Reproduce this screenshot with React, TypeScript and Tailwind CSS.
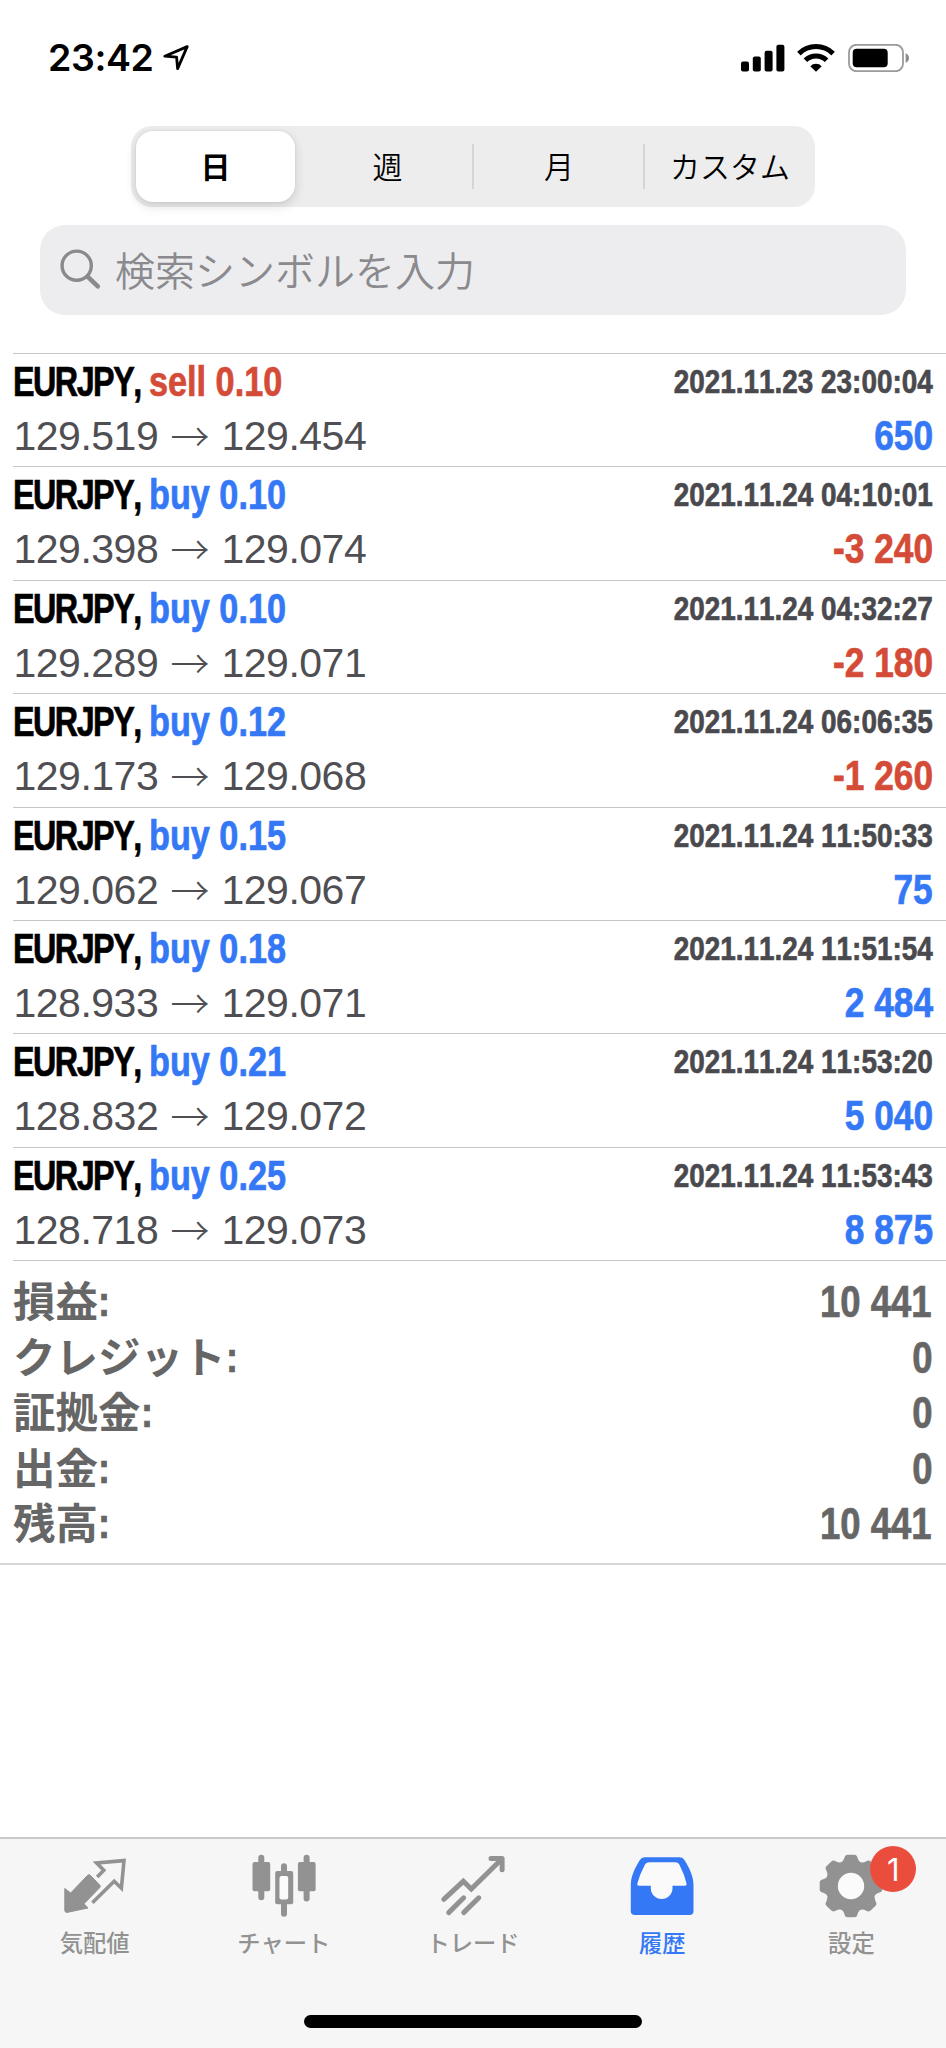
import type { ReactNode } from "react"
import clsx from "clsx"

interface Deal {
  side: "buy" | "sell"
  volume: string
  open: string
  close: string
  time: string
  profit: string
}

const deals: Deal[] = [
  { side: "sell", volume: "0.10", open: "129.519", close: "129.454", time: "2021.11.23 23:00:04", profit: "650" },
  { side: "buy", volume: "0.10", open: "129.398", close: "129.074", time: "2021.11.24 04:10:01", profit: "-3 240" },
  { side: "buy", volume: "0.10", open: "129.289", close: "129.071", time: "2021.11.24 04:32:27", profit: "-2 180" },
  { side: "buy", volume: "0.12", open: "129.173", close: "129.068", time: "2021.11.24 06:06:35", profit: "-1 260" },
  { side: "buy", volume: "0.15", open: "129.062", close: "129.067", time: "2021.11.24 11:50:33", profit: "75" },
  { side: "buy", volume: "0.18", open: "128.933", close: "129.071", time: "2021.11.24 11:51:54", profit: "2 484" },
  { side: "buy", volume: "0.21", open: "128.832", close: "129.072", time: "2021.11.24 11:53:20", profit: "5 040" },
  { side: "buy", volume: "0.25", open: "128.718", close: "129.073", time: "2021.11.24 11:53:43", profit: "8 875" },
]

const totals = [
  { label: "損益", value: "10 441" },
  { label: "クレジット", value: "0" },
  { label: "証拠金", value: "0" },
  { label: "出金", value: "0" },
  { label: "残高", value: "10 441" },
]

const periods = ["日", "週", "月", "カスタム"]

// bold sans squeezed to condensed proportions, with a hairline stroke to keep the stems heavy
const CONDENSED =
  "inline-block whitespace-pre font-['Liberation_Sans',sans-serif] font-bold [font-kerning:none] [-webkit-text-stroke:0.7px_currentColor]"

function StatusBar() {
  return (
    <header className="flex h-[126px] items-start justify-between pl-[48px] pr-[36px] pt-[36px]">
      <div className="flex items-center">
        <span className="font-['Inter',sans-serif] text-[37.5px] font-semibold leading-[44px] tracking-[-0.4px]">23:42</span>
        <svg width="26" height="26" viewBox="0 0 26 26" className="ml-[9px]" fill="none" stroke="#000" strokeWidth="2.8" strokeLinejoin="round">
          <path d="M1.8 11.2 24.2 1.6 14.6 23.6 13.6 12.2Z" />
        </svg>
      </div>
      <div className="flex h-[44px] items-center">
        <svg width="44" height="28" viewBox="0 0 44 28">
          <rect x="0" y="17.5" width="8" height="10" rx="2" />
          <rect x="11.8" y="12.5" width="8" height="15" rx="2" />
          <rect x="23.6" y="6.7" width="8" height="20.8" rx="2" />
          <rect x="35.4" y="0.8" width="8" height="26.7" rx="2" />
        </svg>
        <svg width="38" height="28" viewBox="0 0 38 28" className="ml-[12px]" fill="none" stroke="#000" strokeWidth="5">
          <path d="M1.9 9.6a24.4 24.4 0 0 1 34.2 0" />
          <path d="M8.4 16.3a15.2 15.2 0 0 1 21.2 0" />
          <path d="M13.3 22.2a8 8 0 0 1 11.4 0L19 27.8Z" fill="#000" stroke="none" />
        </svg>
        <svg width="62" height="28" viewBox="0 0 62 28" className="ml-[13px]">
          <rect x="1" y="0.8" width="54" height="26.4" rx="7.5" fill="none" stroke="#9b9b9b" strokeWidth="1.8" />
          <rect x="4.7" y="4.8" width="35" height="18.4" rx="4" />
          <path d="M57.6 9.2c4.6 1.6 4.6 8 0 9.6Z" fill="#8c8c8c" />
        </svg>
      </div>
    </header>
  )
}

function PeriodSwitch() {
  return (
    <div className="mx-auto flex h-[81px] w-[684px] items-center rounded-[21px] bg-[#ededee] font-['Noto_Sans_CJK_JP',sans-serif] text-[30px] font-[350]">
      {periods.map((label, i) => (
        <div key={label} className="flex h-full flex-1 items-center">
          {i > 1 && <span className="-ml-px h-[45px] w-[2px] bg-[#d5d5d8]" />}
          <div
            className={clsx(
              "flex flex-1 items-center justify-center pb-[3px]",
              i === 0 && "ml-[5px] mr-[7px] h-[71px] rounded-[17px] bg-white font-bold shadow-[0_4px_12px_rgba(0,0,0,0.14),0_0_3px_rgba(0,0,0,0.08)]"
            )}
          >
            {label}
          </div>
        </div>
      ))}
    </div>
  )
}

function SearchField() {
  return (
    <div className="mx-[40px] mt-[18px] flex h-[90px] items-center rounded-[25px] bg-[#ededef] pl-[20px] text-[#8a8a8e]">
      <svg width="42" height="42" viewBox="0 0 42 42" fill="none" stroke="currentColor">
        <circle cx="16.7" cy="16.7" r="14.6" strokeWidth="3.4" />
        <path d="M27.6 27.6 37.8 37.4" strokeWidth="4.6" strokeLinecap="round" />
      </svg>
      <span className="ml-[13px] pb-[2px] font-['Noto_Sans_CJK_JP',sans-serif] text-[40px] font-[350] leading-none">検索シンボルを入力</span>
    </div>
  )
}

function DealRow({ deal }: { deal: Deal }) {
  const loss = deal.profit.startsWith("-")

  return (
    <li className="ml-[12.5px] h-[113.4px] border-t border-[#c6c6c9] pr-[13px] pt-[3px]">
      <div className="flex h-[52px] items-start justify-between">
        <div className="flex text-[42px] leading-[50px]">
          <span className="flex w-[136px]">
            <span className={clsx(CONDENSED, "origin-left scale-x-[0.77] tracking-[-2px]")}>EURJPY,</span>
          </span>
          <span className={clsx(CONDENSED, "origin-left scale-x-[0.815]", deal.side === "sell" ? "text-[#d44b37]" : "text-[#3478f6]")}>
            {deal.side} {deal.volume}
          </span>
        </div>
        <span className={clsx(CONDENSED, "origin-right scale-x-[0.82] text-[34px] leading-[49px] text-[#4a4a4e]")}>{deal.time}</span>
      </div>
      <div className="flex h-[54px] items-center justify-between">
        <div className="flex items-center pl-[1px] text-[41px] leading-[54px] text-[#4f4f53]">
          <span className="w-[149px] font-['Liberation_Sans',sans-serif] tracking-[-0.5px]">{deal.open}</span>
          <span className="ml-[8px] mr-[11px] w-[40px] pb-[4px] font-['Noto_Sans_CJK_JP',sans-serif] text-[39px] font-light leading-[50px]">→</span>
          <span className="font-['Liberation_Sans',sans-serif] tracking-[-0.5px]">{deal.close}</span>
        </div>
        <span className={clsx(CONDENSED, "origin-right scale-x-[0.84] text-[42px] leading-[54px]", loss ? "text-[#d44b37]" : "text-[#3478f6]")}>{deal.profit}</span>
      </div>
    </li>
  )
}

function Totals() {
  return (
    <dl className="flex h-[304px] flex-col border-b-2 border-[#d6d6d8] pl-[13px] pr-[14px] pt-[13px] text-[#666]">
      {totals.map((row) => (
        <div key={row.label} className="flex h-[55.5px] items-center justify-between">
          <dt className="flex text-[42.5px] font-bold leading-[55px]">
            <span className="-mt-[3px] font-['Noto_Sans_CJK_JP',sans-serif]">{row.label}</span>
            <span className={clsx(CONDENSED, "origin-left scale-x-[0.85]")}>:</span>
          </dt>
          <dd className={clsx(CONDENSED, "origin-right scale-x-[0.83] text-[44px] leading-[55px]")}>{row.value}</dd>
        </div>
      ))}
    </dl>
  )
}

function QuotesIcon() {
  return (
    <svg width="68" height="68" viewBox="0 0 68 68">
      <path
        d="M3.8 36.5 9.7 41 26.6 23.3q1.4-1.2 2.8 0l9.4 9.9q1 1.2 0 2.4L23 51.8l4 4.2-21 4.4q-2.2 0-2.2-2Z"
        fill="currentColor"
        stroke="currentColor"
        strokeLinejoin="round"
      />
      <path d="m36.2 25 6.600-6.800-7.200-7.200 27.400-2.400-2.600 27.600-7.200-7-21.800 21.600" fill="none" stroke="currentColor" strokeWidth="3.6" />
    </svg>
  )
}

function ChartIcon() {
  return (
    <svg width="68" height="68" viewBox="0 0 68 68" fill="currentColor">
      <rect x="8.3" y="2.7" width="6" height="45.6" rx="3" />
      <rect x="2.5" y="10" width="17.7" height="29.3" rx="2" />
      <rect x="31" y="11.2" width="6" height="53.5" rx="3" />
      <rect x="25.2" y="19" width="18" height="33.2" rx="2" />
      <rect x="29.5" y="24" width="8.7" height="23.4" rx="2" fill="#fbfbfb" />
      <rect x="53.6" y="2.7" width="6" height="46.8" rx="3" />
      <rect x="47.9" y="10" width="17.7" height="29.3" rx="2" />
    </svg>
  )
}

function TradeIcon() {
  return (
    <svg width="68" height="68" viewBox="0 0 68 68" fill="none" stroke="currentColor" strokeWidth="5" strokeLinecap="round">
      <path d="M4.8 47.3 24.3 29.3 32.3 37 62 7.8" />
      <path d="M52 6.6h11.1v11.2" strokeLinejoin="round" />
      <path d="M9.7 60.6 24.7 45.8M24.7 60.6 39.8 45.8" />
    </svg>
  )
}

function HistoryIcon() {
  return (
    <svg width="68" height="68" viewBox="0 0 68 68">
      <path
        d="M16.5 5.2H52Q54.8 5.2 56.6 8.2C61.5 16.5 65.5 24 65.5 33V59q0 4-4 4H6.8q-4 0-4-4V33C2.8 24 6.8 16.5 11.7 8.2Q13.5 5.2 16.5 5.2Z"
        fill="currentColor"
      />
      <path
        d="M21.5 10.3h25.5q3.4 0 4.8 3.2 4.6 9 6.8 18.2.3 2-1.6 2H44.5v2.5a10.85 10.85 0 0 1-21.7 0v-2.5H11q-2.1 0-1.7-2 2.4-9.2 7.2-18.2 1.5-3.2 5-3.2Z"
        fill="#fafafa"
      />
    </svg>
  )
}

function SettingsIcon() {
  return (
    <svg width="68" height="68" viewBox="0 0 68 68" fill="currentColor">
      <circle cx="34" cy="34" r="25.2" />
      {[0, 45, 90, 135, 180, 225, 270, 315].map((angle) => (
        <path
          key={angle}
          d="M22.5 11.5Q26.3 9.8 27.3 6.2 28 2.7 30.5 2.7h7Q40 2.7 40.7 6.2 41.7 9.8 45.5 11.5Z"
          transform={`rotate(${angle} 34 34)`}
        />
      ))}
      <circle cx="34" cy="34" r="13.2" fill="#fbfbfb" />
    </svg>
  )
}

function TabItem({ icon, label, active, badge }: { icon: ReactNode; label: string; active?: boolean; badge?: string }) {
  return (
    <div className={clsx("flex flex-1 flex-col items-center pt-[13px]", active ? "text-[#3478f6]" : "text-[#929292]")}>
      <div className="relative">
        {icon}
        {badge && (
          <span className="absolute left-[53px] top-[-6px] flex size-[46px] items-center justify-center rounded-full bg-[#eb4d3d] font-['Inter',sans-serif] text-[31px] leading-none text-white">
            {badge}
          </span>
        )}
      </div>
      <span className="mt-[5px] font-['Noto_Sans_CJK_JP',sans-serif] text-[23.3px] font-medium leading-[34px]">{label}</span>
    </div>
  )
}

export default function App() {
  return (
    <div className="flex h-[2048px] w-[946px] flex-col overflow-hidden bg-white text-black">
      <StatusBar />
      <PeriodSwitch />
      <SearchField />
      <main className="mt-[38px] flex-1">
        <ul>
          {deals.map((deal) => (
            <DealRow key={deal.time} deal={deal} />
          ))}
        </ul>
        <div className="ml-[12.5px] h-px bg-[#c6c6c9]" />
        <Totals />
      </main>
      <footer className="flex h-[211px] flex-col items-center justify-between border-t-2 border-[#c9c9ca] bg-[#f6f6f6] pb-[20px]">
        <nav className="flex w-full">
          <TabItem icon={<QuotesIcon />} label="気配値" />
          <TabItem icon={<ChartIcon />} label="チャート" />
          <TabItem icon={<TradeIcon />} label="トレード" />
          <TabItem icon={<HistoryIcon />} label="履歴" active />
          <TabItem icon={<SettingsIcon />} label="設定" badge="1" />
        </nav>
        <div className="h-[13px] w-[338px] rounded-full bg-black" />
      </footer>
    </div>
  )
}
